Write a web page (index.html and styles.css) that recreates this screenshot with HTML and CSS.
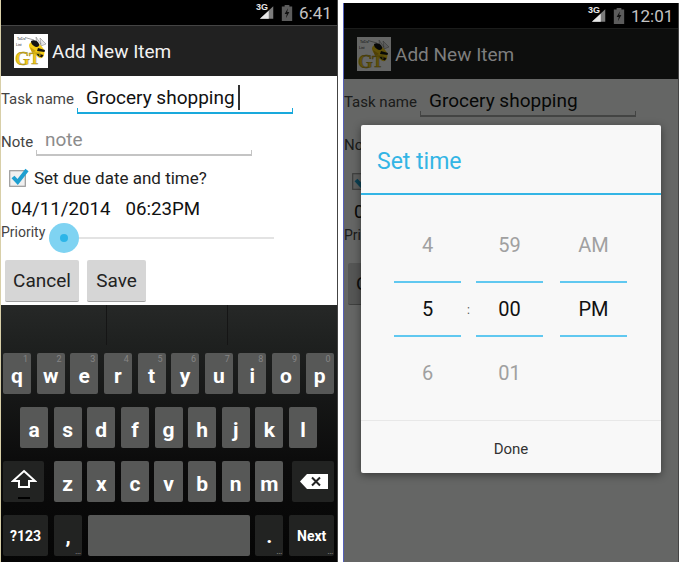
FILE: index.html
```html
<!DOCTYPE html>
<html lang="en">
<head>
<meta charset="utf-8">
<title>Add New Item</title>
<link rel="stylesheet" href="styles.css">
</head>
<body>
<svg class="defs" aria-hidden="true">
  <symbol id="logo" viewBox="0 0 34 34">
    <rect width="34" height="34" fill="#fff"/>
    <text x="3" y="5.5" class="logo-small">ToDo</text>
    <text x="2" y="12" class="logo-small">List</text>
    <path d="M11 3.5 L20 6" stroke="#444" stroke-width=".5" fill="none"/>
    <path d="M26 4 L32 10 L27 12 Z M22 3 L27 10 L23 11 Z" fill="#e4e4e4" stroke="#777" stroke-width=".5"/>
    <path d="M15 12 C15 7 22 6 24 9 C27 12 32 15 30 21 C29 25 25 25 23 22 C20 19 16 17 15 12 Z" fill="#f4cc16"/>
    <path d="M17 7 C20 5 24 7 25 10 C26 13 22 14 20 12 C18 11 17 9 17 7 Z" fill="#141414"/>
    <path d="M24 14 L31 16 L30.5 18 L23 17 Z M22 19 L29.5 21 L28 23.5 L24 22 Z" fill="#141414"/>
    <path d="M16 13 L22 17 L18 19 Z" fill="#c99f10"/>
    <text x="1" y="31" class="logo-g">G</text>
    <text x="15" y="30" class="logo-t">T</text>
  </symbol>
  <symbol id="signal" viewBox="0 0 18 16">
    <path d="M1 15 L16 1 V15 Z" fill="#7c7c7c"/>
    <path d="M1 15 L11 6 V15 Z" fill="#e8e8e8"/>
  </symbol>
  <symbol id="battery" viewBox="0 0 12 17">
    <path d="M3.5 0 H8.5 V1.5 H11.5 V17 H.5 V1.5 H3.5 Z" fill="#5c5c5c"/>
    <path d="M7 3.5 L3.5 9.5 H5.8 L4.8 14 L8.5 7.5 H6.2 Z" fill="#111"/>
  </symbol>
  <symbol id="check" viewBox="0 0 20 20">
    <rect x=".7" y="2.7" width="15.6" height="15.6" fill="#f0f0f0" stroke="#9a9a9a" stroke-width="1.2"/>
    <path d="M4 9 L8.7 14 L18 2" fill="none" stroke="#1f9fd0" stroke-width="4"/>
  </symbol>
</svg>

<main class="screens">
  <section class="phone phone-left">
    <header class="status">
      <span class="net"><span class="net-label">3G</span><svg class="signal"><use href="#signal"/></svg></span>
      <svg class="battery"><use href="#battery"/></svg>
      <span class="clock">6:41</span>
    </header>
    <div class="actionbar">
      <svg class="logo"><use href="#logo"/></svg>
      <h1 class="title">Add New Item</h1>
    </div>
    <form class="form">
      <div class="row row-task">
        <span class="label label-task">Task name</span>
        <div class="field field-active"><span class="value">Grocery shopping</span><span class="caret"></span></div>
      </div>
      <div class="row row-note">
        <span class="label label-note">Note</span>
        <div class="field field-note"><span class="placeholder">note</span></div>
      </div>
      <div class="row row-check">
        <svg class="checkbox"><use href="#check"/></svg>
        <span class="check-label">Set due date and time?</span>
      </div>
      <div class="row row-date"><span>04/11/2014</span><span>06:23PM</span></div>
      <div class="row row-priority">
        <span class="label label-priority">Priority</span>
        <div class="slider"><span class="halo"></span><span class="thumb"></span></div>
      </div>
      <div class="row row-buttons">
        <span class="btn btn-cancel">Cancel</span>
        <span class="btn btn-save">Save</span>
      </div>
    </form>
    <div class="keyboard">
      <div class="strip"><span class="cell"></span><span class="cell"></span><span class="cell"></span></div>
      <div class="keys">
        <div class="keyrow">
          <span class="key">q<i class="hint">1</i></span><span class="key">w<i class="hint">2</i></span><span class="key">e<i class="hint">3</i></span><span class="key">r<i class="hint">4</i></span><span class="key">t<i class="hint">5</i></span><span class="key">y<i class="hint">6</i></span><span class="key">u<i class="hint">7</i></span><span class="key">i<i class="hint">8</i></span><span class="key">o<i class="hint">9</i></span><span class="key">p<i class="hint">0</i></span>
        </div>
        <div class="keyrow keyrow-home">
          <span class="key">a</span><span class="key">s</span><span class="key">d</span><span class="key">f</span><span class="key">g</span><span class="key">h</span><span class="key">j</span><span class="key">k</span><span class="key">l</span>
        </div>
        <div class="keyrow keyrow-shift">
          <span class="key key-dark key-shift">
            <svg class="shift-icon" viewBox="0 0 26 20"><path d="M13 2 L24 12 H18 V18 H8 V12 H2 Z" fill="none" stroke="#fff" stroke-width="2"/></svg>
            <i class="shift-led"></i>
          </span>
          <span class="key">z</span><span class="key">x</span><span class="key">c</span><span class="key">v</span><span class="key">b</span><span class="key">n</span><span class="key">m</span>
          <span class="key key-dark key-del">
            <svg class="del-icon" viewBox="0 0 28 15"><path d="M7 0 H28 V15 H7 L0 7.5 Z" fill="#fff"/><path d="M12 3.5 L20 11.5 M20 3.5 L12 11.5" stroke="#222" stroke-width="2"/></svg>
          </span>
        </div>
        <div class="keyrow keyrow-bottom">
          <span class="key key-dark key-sym">?123</span>
          <span class="key key-dark key-punct">,<i class="dots">…</i></span>
          <span class="key key-space"></span>
          <span class="key key-dark key-punct">.<i class="dots">…</i></span>
          <span class="key key-dark key-next">Next<i class="dots">…</i></span>
        </div>
      </div>
    </div>
  </section>

  <section class="phone phone-right">
    <header class="status">
      <span class="net"><span class="net-label">3G</span><svg class="signal"><use href="#signal"/></svg></span>
      <svg class="battery"><use href="#battery"/></svg>
      <span class="clock">12:01</span>
    </header>
    <div class="actionbar">
      <svg class="logo"><use href="#logo"/></svg>
      <h1 class="title">Add New Item</h1>
    </div>
    <form class="form form-dimmed">
      <div class="row row-task">
        <span class="label label-task">Task name</span>
        <div class="field field-idle"><span class="value">Grocery shopping</span></div>
      </div>
      <div class="row row-note">
        <span class="label label-note">Note</span>
      </div>
      <div class="row row-check">
        <svg class="checkbox"><use href="#check"/></svg>
      </div>
      <div class="row row-date"><span>04/11/2014</span></div>
      <div class="row row-priority">
        <span class="label label-priority">Priority</span>
      </div>
      <div class="row row-buttons">
        <span class="btn btn-cancel">Cancel</span>
      </div>
    </form>
    <div class="scrim"></div>
    <div class="dialog">
      <div class="dialog-title">Set time</div>
      <div class="picker">
        <div class="wheel">
          <span class="cell-off">4</span><span class="cell-on">5</span><span class="cell-off">6</span>
        </div>
        <span class="colon">:</span>
        <div class="wheel">
          <span class="cell-off">59</span><span class="cell-on">00</span><span class="cell-off">01</span>
        </div>
        <div class="wheel wheel-ampm">
          <span class="cell-off">AM</span><span class="cell-on">PM</span><span class="cell-off"></span>
        </div>
      </div>
      <div class="dialog-done">Done</div>
    </div>
  </section>
</main>
</body>
</html>
```
FILE: styles.css
```css
* { box-sizing: border-box; }
html, body { margin: 0; padding: 0; }
body { width: 679px; height: 562px; background: #fff; overflow: hidden; font-family: Roboto, "Noto Sans", sans-serif; color: #222; }
.defs { display: none; }
.logo-small { font: 3.6px "Liberation Sans", sans-serif; fill: #222; }
.logo-g { font: bold 19px "Liberation Serif", serif; fill: #f2c917; stroke: #8a7410; stroke-width: .4; }
.logo-t { font: bold 17px "Liberation Serif", serif; fill: #f2c917; stroke: #8a7410; stroke-width: .4; }

.screens { display: flex; align-items: flex-start; height: 562px; }
.phone { position: relative; display: flex; flex-direction: column; overflow: hidden; background: #fff; }
.phone-left { width: 338px; height: 562px; border-left: 1px solid #d8cfa8; border-right: 1px solid #444; }
.phone-right { width: 336px; height: 559px; margin-top: 3px; margin-left: 5px; border-left: 1px solid #5560b8; border-right: 1px solid #444; }

.status { height: 25px; flex: none; background: #000; display: flex; align-items: center; justify-content: flex-end; padding-right: 8px; }
.net { position: relative; display: flex; margin-right: 6px; }
.net-label { position: absolute; left: -3px; top: -3px; font: bold 9px "Liberation Sans Narrow", "Liberation Sans", sans-serif; color: #e8e8e8; }
.signal { width: 16px; height: 15px; display: block; }
.battery { width: 12px; height: 16px; margin-right: 6px; }
.clock { font-size: 17px; color: #c4c4c4; width: 30px; }
.phone-right .clock { width: 39px; }

.actionbar { height: 51px; flex: none; background: #212121; display: flex; align-items: center; padding-left: 13px; box-shadow: 0 1px 0 #444 inset; }
.logo { width: 34px; height: 34px; flex: none; margin-right: 4px; }
.title { margin: 0; padding-top: 2px; font-size: 19px; font-weight: 400; color: #f2f2f2; }
.phone-right .title { position: relative; z-index: 1; color: #7e7e7e; }

.form { padding-top: 2px; background: #fff; flex: none; }
.row { display: flex; align-items: center; }
.label { flex: none; white-space: nowrap; color: #444; font-size: 15px; }
.row-task { height: 42px; }
.label-task { width: 72px; margin-right: 4px; }
.field { position: relative; width: 216px; height: 32px; display: flex; align-items: center; border-bottom: 2px solid #c4c4c4; padding: 2px 0 0 9px; font-size: 19px; margin-top: -3px; }
.field::before, .field::after { content: ""; position: absolute; bottom: 0; width: 1px; height: 4px; background: inherit; }
.field::before { left: 0; }
.field::after { right: 0; }
.field-active { border-bottom-color: #19a9dc; background: #fff; }
.field-active::before, .field-active::after { background: #19a9dc; }
.field-idle::before, .field-idle::after { background: #aaa; }
.field-idle { border-bottom-color: #aaa; }
.value { color: #111; }
.caret { width: 2px; height: 25px; background: #333; margin-left: 3px; }
.row-note { height: 42px; padding-top: 1px; }
.label-note { width: 31px; margin-right: 4px; }
.field-note { padding: 0 0 0 9px; }
.field-note::before, .field-note::after { background: #c4c4c4; }
.placeholder { color: #8c8c8c; }
.row-check { height: 32px; padding-left: 8px; }
.checkbox { width: 20px; height: 20px; margin-right: 5px; flex: none; }
.check-label { font-size: 17px; color: #222; }
.row-date { height: 30px; padding-left: 10px; gap: 15px; font-size: 18.7px; color: #111; }
.row-priority { height: 28px; position: relative; align-items: flex-start; }
.label-priority { font-size: 14px; margin-top: 0; }
.slider { position: absolute; left: 63px; top: 13px; width: 210px; height: 2px; background: #e3e3e3; }
.halo { position: absolute; left: -15px; top: -14px; width: 30px; height: 30px; border-radius: 50%; background: #7fd3f2; }
.thumb { position: absolute; left: -4px; top: -3px; width: 8px; height: 8px; border-radius: 50%; background: #2cb5e8; }
.row-buttons { padding: 8px 0 3px 4px; gap: 8px; }
.btn { height: 42px; display: flex; align-items: center; justify-content: center; background: #d6d6d6; border-bottom: 1px solid #a0a0a0; border-radius: 2px; font-size: 19px; color: #222; }
.btn-cancel { width: 74px; }
.btn-save { width: 59px; }

.keyboard { flex: 1; background: linear-gradient(#262827, #1f2120 14%, #0c0c0c 60%, #050505); display: flex; flex-direction: column; }
.strip { height: 48px; display: flex; padding-bottom: 8px; flex: none; }
.cell { width: 121px; border-right: 1px solid #151515; height: 40px; }
.cell:first-child { width: 106px; }
.cell:last-child { border-right: 0; flex: 1; }
.keys { display: flex; flex-direction: column; gap: 13px; padding: 0 2px; }
.keyrow { display: flex; gap: 5.6px; height: 41px; }
.key { position: relative; flex: 0 0 28.04px; display: flex; align-items: center; justify-content: center; padding-top: 4px; background: #575857; border-radius: 2px; color: #fff; font-weight: 700; font-size: 21px; font-family: Roboto, sans-serif; }
.keyrow-home { padding-left: 17px; }
.keyrow-shift .key-shift { flex-basis: 41px; margin-right: 4px; padding-top: 0; }
.keyrow-shift .key-del { flex-basis: 42px; margin-left: 3px; padding-top: 0; }
.key-dark { background: #222322; }
.hint { position: absolute; right: 3px; top: 1px; font-style: normal; font-weight: 400; font-size: 9px; color: #858585; }
.dots { position: absolute; right: 1px; bottom: 0; font-style: normal; font-weight: 400; font-size: 9px; line-height: 9px; color: #999; }
.shift-icon { width: 26px; height: 20px; margin-bottom: 5px; }
.shift-led { position: absolute; left: 15px; bottom: 3px; width: 12px; height: 2px; background: #000; }
.del-icon { width: 28px; height: 15px; margin-left: 2px; }
.key-sym { flex-basis: 45px; font-size: 14px; padding-top: 0; margin-right: 0.4px; }
.key-punct { flex-basis: 28px; align-items: flex-end; padding-bottom: 8px; }
.key-space { flex-basis: 162px; }
.key-next { flex-basis: 45px; font-size: 14px; padding-top: 0; margin-left: 0.4px; }

.scrim { position: absolute; left: 0; right: 0; top: 25px; bottom: 0; background: rgba(0, 2, 0, .605); }
.form-dimmed { flex: 1; }
.dialog { position: absolute; left: 17px; top: 122px; width: 300px; height: 348px; background: #f8f8f8; border-radius: 2px; box-shadow: 0 2px 9px rgba(0, 0, 0, .45); display: flex; flex-direction: column; }
.dialog-title { height: 70px; flex: none; border-bottom: 2px solid #33b5e5; color: #33b5e5; font-size: 23px; padding: 5px 0 0 16px; display: flex; align-items: center; }
.picker { height: 226px; flex: none; display: flex; padding: 18px 0 0 33px; border-bottom: 1px solid #e8e8e8; }
.wheel { width: 67px; display: flex; flex-direction: column; }
.wheel-ampm { margin-left: 17px; }
.colon { width: 15px; height: 64px; margin-top: 64px; display: flex; align-items: center; justify-content: center; font-size: 12px; color: #555; padding-top: 2px; }
.cell-off { height: 64px; flex: none; display: flex; align-items: center; justify-content: center; font-size: 20px; color: #a0a0a0; }
.cell-on { height: 56px; flex: none; margin: 4px 0; display: flex; align-items: center; justify-content: center; font-size: 20px; color: #111; border-top: 2px solid #60c8f0; border-bottom: 2px solid #60c8f0; }
.dialog-done { flex: 1; display: flex; align-items: center; justify-content: center; padding-top: 3px; font-size: 15px; color: #333; }
```
